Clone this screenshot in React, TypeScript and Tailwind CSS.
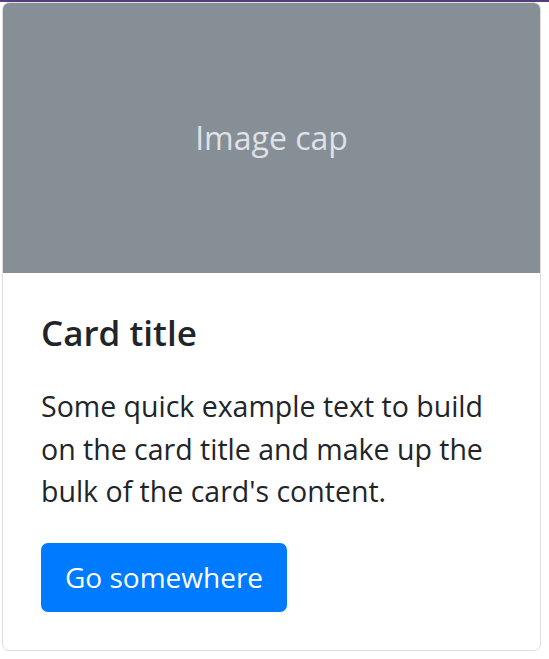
import React from 'react';

const App: React.FC = () => {
  return (
    <div className="min-h-screen bg-white" style={{ fontFamily: '"Open Sans", "Noto Sans", sans-serif' }}>
      <div className="h-[2px] bg-[#563d7c]" />
      <div className="pl-[2px]">
        <div className="w-[539px] h-[649px] border border-[#dfdfdf] rounded-[7px] overflow-hidden flex flex-col">
          <div className="h-[270px] bg-[#868e96] flex items-center justify-center text-[#dee2e6] text-[32px]">
            Image cap
          </div>
          <div className="px-[38px] pt-[39px] pb-[38px] text-[#212529]">
            <h5 className="text-[35px] font-semibold leading-[42px] mb-[31px]">Card title</h5>
            <p className="text-[28.5px] leading-[42.5px] mb-[30px]">
              Some quick example text to build on the card title and make up the bulk of the card's content.
            </p>
            <a
              href="#"
              className="inline-flex items-center justify-center h-[69px] px-[24px] rounded-[7px] bg-[#007bff] text-white text-[28px]"
            >
              Go somewhere
            </a>
          </div>
        </div>
      </div>
    </div>
  );
};

export default App;
